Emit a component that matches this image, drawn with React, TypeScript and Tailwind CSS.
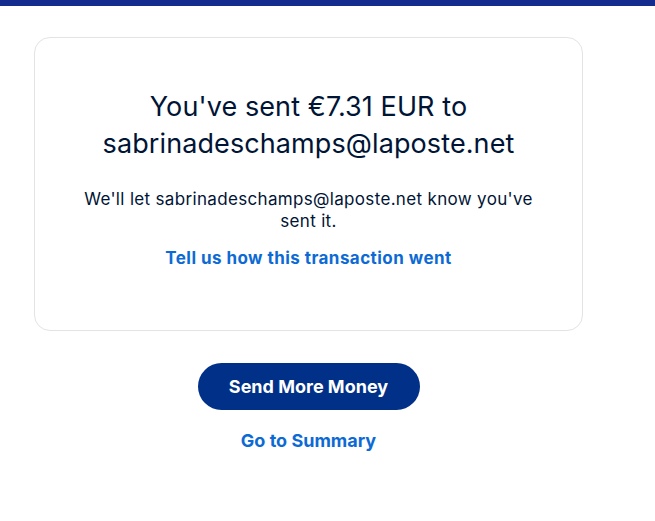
export default function App() {
  return (
    <div className="min-h-screen bg-white" style={{ fontFamily: 'Inter, "Noto Sans", sans-serif' }}>
      <div className="h-[6px] bg-[#142c8e]" />
      <div className="w-[549px] ml-[34px] mt-[31px]">
        <div className="border border-[#e3e3e3] rounded-[16px] h-[294px] pt-[50px] px-6 text-center">
          <h1 className="text-[27px] leading-[37px] tracking-[0.1px] text-[#001435] font-normal">
            You've sent €7.31 EUR to
            <br />
            sabrinadeschamps@laposte.net
          </h1>
          <p className="mt-[26px] text-[17px] leading-[22px] tracking-[0.33px] text-[#001435] px-[20px]">
            We'll let sabrinadeschamps@laposte.net know you've sent it.
          </p>
          <a className="block mt-[14px] text-[17px] leading-[24px] tracking-[0.45px] font-bold text-[#0d6ad4]">
            Tell us how this transaction went
          </a>
        </div>
        <div className="flex flex-col items-center mt-[32px]">
          <button className="w-[222px] h-[47px] rounded-full bg-[#003087] text-white font-bold text-[18px]">
            Send More Money
          </button>
          <a className="mt-[17px] text-[18px] font-bold text-[#0d6ad4]">Go to Summary</a>
        </div>
      </div>
    </div>
  );
}
